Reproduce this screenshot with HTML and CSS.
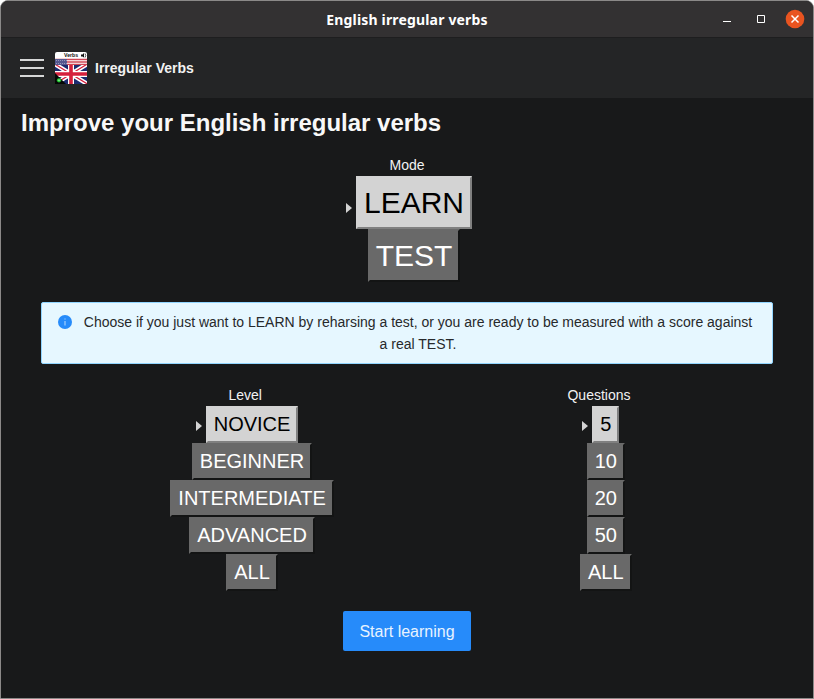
FILE: index.html
```html
<!DOCTYPE html>
<html lang="en">
<head>
<meta charset="utf-8">
<title>English irregular verbs</title>
<link rel="stylesheet" href="styles.css">
</head>
<body>
<div class="window">
  <header class="titlebar">
    <span></span>
    <span class="window-title">English irregular verbs</span>
    <div class="controls">
      <svg width="92" height="24" viewBox="0 0 92 24">
        <path d="M5 14.500h8" stroke="#fff"/>
        <path d="M39.500 8.500h7v7h-7z" fill="none" stroke="#fff"/>
        <circle cx="77" cy="12" r="9.300" fill="#e95420"/>
        <path d="M73.500 8.500l7 7M80.500 8.500l-7 7" stroke="#fff" stroke-width="1.500"/>
      </svg>
    </div>
  </header>
  <nav class="navbar">
    <div class="burger"><i></i><i></i><i></i></div>
    <svg class="logo" width="32" height="32" viewBox="0 0 32 32">
      <defs><clipPath id="uk"><path d="M0 13h32v19H0z"/></clipPath></defs>
      <rect width="32" height="32" rx="2" fill="#fff"/>
      <text x="9" y="5.300" class="logo-text">Verbs</text>
      <path d="M26 2.500h1.500L29 1v4.500L27.500 4.500H26z" fill="#111"/>
      <path d="M30 1.500q1.500 2 0 4" fill="none" stroke="#222" stroke-width=".8"/>
      <path d="M0 7.500h32M0 10h32M0 12.500h32" stroke="#cf4555" stroke-width="1.400"/>
      <path d="M0 7h12v6H0z" fill="#55588f"/>
      <path d="M1 8.500h11M1 11.500h11" stroke="#a5a6c5" stroke-width=".8" stroke-dasharray="1 1"/>
      <g clip-path="url(#uk)">
        <path d="M0 13h32v19H0z" fill="#1b2b70"/>
        <path d="M-2 11l36 22M34 11L-2 33" stroke="#fff" stroke-width="4.400"/>
        <path d="M-2 11l36 22M34 11L-2 33" stroke="#d51f3c" stroke-width="1.200"/>
        <path d="M16 13v19M0 22h32" stroke="#fff" stroke-width="6"/>
        <path d="M16 13v19M0 22h32" stroke="#d51f3c" stroke-width="3.600"/>
      </g>
      <path d="M0 21l11 11H0z" fill="#050805"/>
      <circle cx="4" cy="28.300" r="2.100" fill="#25c936"/>
      <circle cx="4" cy="28.300" r=".8" fill="#a5efaa"/>
    </svg>
    <span class="brand">Irregular Verbs</span>
  </nav>
  <main>
    <h1>Improve your English irregular verbs</h1>
    <section class="group mode">
      <div class="label">Mode</div>
      <div class="option selected">LEARN</div>
      <div class="option">TEST</div>
    </section>
    <div class="alert">
      <svg width="14" height="14" viewBox="0 0 14 14"><circle cx="7" cy="7" r="7" fill="#268bfa"/><path d="M7 6v4.500M7 3.500v1" stroke="#b9dcfd"/></svg>
      <p>Choose if you just want to LEARN by reharsing a test, or you are ready to be measured with a score against a real TEST.</p>
    </div>
    <div class="choices">
      <section class="group">
        <div class="label">Level</div>
        <div class="option selected">NOVICE</div>
        <div class="option">BEGINNER</div>
        <div class="option">INTERMEDIATE</div>
        <div class="option">ADVANCED</div>
        <div class="option">ALL</div>
      </section>
      <section class="group">
        <div class="label">Questions</div>
        <div class="option selected">5</div>
        <div class="option">10</div>
        <div class="option">20</div>
        <div class="option">50</div>
        <div class="option">ALL</div>
      </section>
    </div>
    <button class="start">Start learning</button>
  </main>
</div>
</body>
</html>
```
FILE: styles.css
```css
* { box-sizing: border-box; }
body {
  margin: 0;
  background: #fff;
  color: #f2f2f2;
  font: 14px/22px "Liberation Sans", Arial, sans-serif;
}
.window {
  height: 699px;
  border: 1px solid #8b8988;
  border-radius: 8px 8px 0 0;
  background: #18191a;
  overflow: hidden;
}
.titlebar {
  display: grid;
  grid-template-columns: 1fr auto 1fr;
  align-items: center;
  height: 37px;
  background: #333132;
  border-bottom: 1px solid #1e1e1f;
}
.window-title {
  padding-top: 2px;
  font: bold 14px/20px "Noto Sans", sans-serif;
  letter-spacing: 0.17px;
  color: #fff;
}
.controls { display: flex; justify-content: flex-end; padding-right: 3px; }
.controls svg { display: block; }
.navbar {
  display: flex;
  align-items: center;
  height: 60px;
  padding-left: 19px;
  background: #242526;
}
.burger { display: flex; flex-direction: column; gap: 6px; width: 24px; margin-right: 11px; }
.burger i { height: 2px; background: #d6d7d7; }
.logo { margin-right: 8px; }
.logo-text { font: bold 5.200px "Liberation Sans", sans-serif; fill: #111; }
.brand { font-weight: bold; }
main { display: flex; flex-direction: column; padding: 10px 40px 0; }
h1 { margin: 0 0 16px -20px; font-size: 24px; line-height: 30px; color: #f8f8f8; }
.group { display: flex; flex-direction: column; align-items: center; }
.option {
  position: relative;
  height: 37px;
  margin-left: 13.6px;
  padding: 0 6px;
  border: 2px solid;
  border-color: #696969 #131414 #131414 #696969;
  background: #696969;
  color: #fff;
  font-size: 20px;
  line-height: 33px;
}
.selected {
  background: #d3d3d3;
  border-color: #d3d3d3 #808080 #808080 #d3d3d3;
  color: #000;
}
.selected::before {
  content: "";
  position: absolute;
  left: -12px;
  top: 13px;
  border: solid transparent;
  border-width: 5px 0 5px 6px;
  border-left-color: #d3d3d3;
}
.mode .option { height: 53px; margin-left: 14px; font-size: 30px; line-height: 49px; }
.mode .selected::before { top: 25px; }
.alert {
  display: flex;
  height: 62px;
  margin-top: 20px;
  padding: 8px 15px 8px 16px;
  border: 1px solid #91d5ff;
  border-radius: 2px;
  background: #e6f7ff;
  color: #27292b;
}
.alert svg { flex: none; margin: 4px 7px 0 0; }
.alert p { flex: 1; margin: 0; text-align: center; }
.choices {
  display: grid;
  grid-template-columns: 354px 353.5px;
  margin: 20px -20px 0 27.25px;
}
.start {
  align-self: center;
  width: 128px;
  height: 40px;
  margin-top: 20px;
  padding: 1px 0 0;
  border: 0;
  border-radius: 2px;
  background: #268bfa;
  color: #e8f3ff;
  font: 16px/39px "Liberation Sans", Arial, sans-serif;
}
```
